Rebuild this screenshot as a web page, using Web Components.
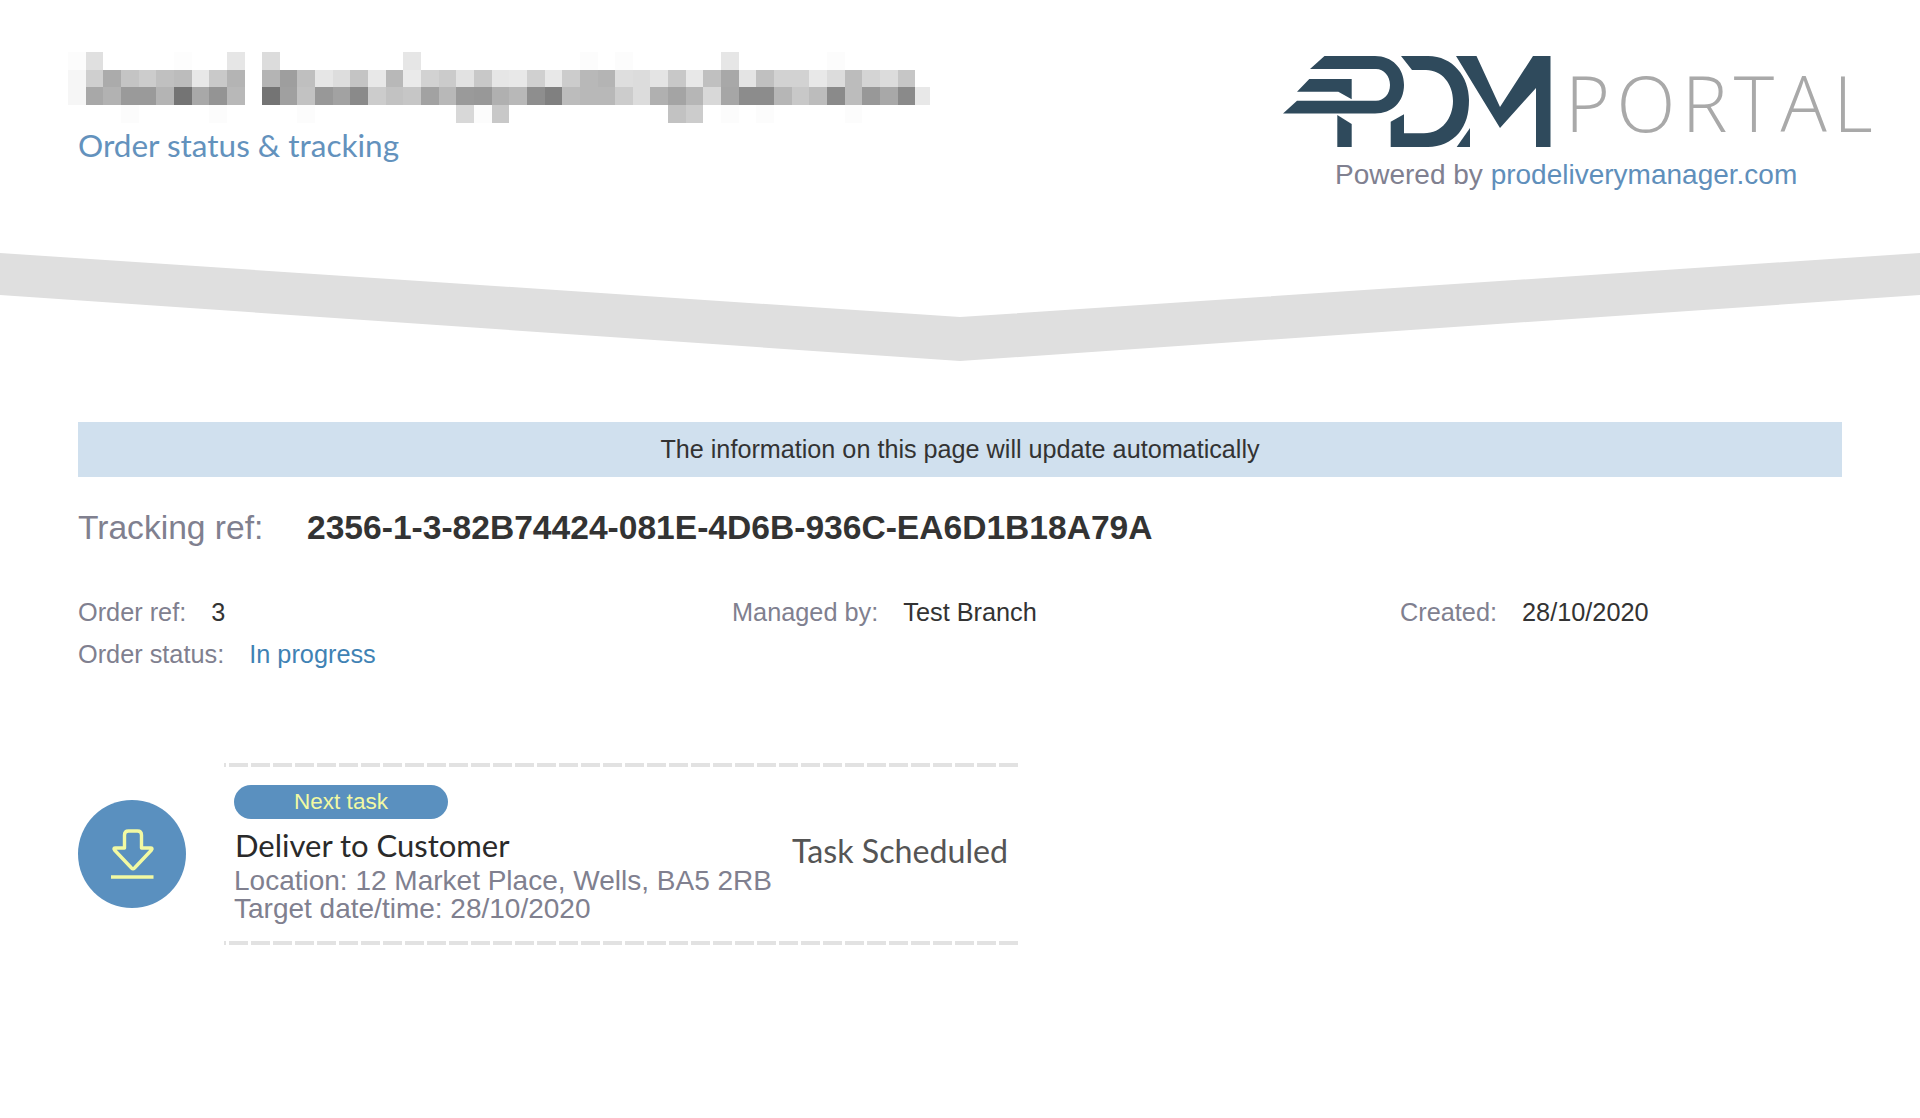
<!DOCTYPE html>
<html lang="en">
<head>
<meta charset="utf-8">
<title>Order status &amp; tracking</title>
<style>
  html, body { margin: 0; background: #fff; }
  body { font-family: "Liberation Sans", Arial, sans-serif; color: #333; }
</style>
</head>
<body>
<order-page></order-page>

<script>
// Small helper, every element just stamps its template into an open shadow root
function makeTemplate(html) {
  const template = document.createElement('template')
  template.innerHTML = html
  return template
}

class BaseElement extends HTMLElement {
  constructor() {
    super()
    this._shadowRoot = this.attachShadow({ mode: 'open' })
    this._shadowRoot.appendChild(this.constructor.template.content.cloneNode(true))
  }
}

// Blurred out company name, drawn as a mosaic of grey cells
const maskRows = [
  'fc e0 ff ff ff ff fd ff ff e6 ff dc ff ff ff ff ff ff ff e6 ff ff ff ff ff ff ff ff ff fc ff fc ff ff ff ff ff e6 ff ff ff ff ff fc ff ff ff ff ff',
  'f6 cf ab c4 cc c0 bc e8 c9 b4 ff b4 9e bf e6 dd c4 e8 b8 ea d2 cb e2 c8 e6 e8 d0 e8 cc b8 b4 de dc e4 c8 e8 c0 a8 e4 c0 d2 d2 e8 dc bc d4 dc c6 ff',
  'f6 a8 b2 9a 9a b4 74 a8 94 b8 ff 74 a0 c2 98 a2 8a cc c2 c6 a2 b8 9a 98 b0 b8 8e 80 bc b8 b8 cc dc b0 a4 b6 d8 a6 8c 8c b6 c8 bc 8a bc 98 a8 8a e8',
  'ff ff ff fc ff ff ff ff fc ff ff ff ff fc ff ff ff ff ff ff ff ff d8 fc c8 ff ff ff ff ff ff ff ff ff c2 cc ff fc ff fc ff ff ff ff fc ff ff ff ff'
]

class PixelMask extends BaseElement {
  static template = makeTemplate(`
    <style>
      :host { display: block; width: 862px; height: 71px; }
      svg { display: block; }
    </style>
    <svg width="862" height="71" viewBox="0 0 862 71" shape-rendering="crispEdges"></svg>
  `)

  connectedCallback() {
    const svg = this._shadowRoot.querySelector('svg')
    let out = ''
    maskRows.forEach((row, y) => {
      row.split(' ').forEach((grey, x) => {
        if (grey === 'ff') return
        const left = Math.round(x * 17.65)
        const right = Math.round((x + 1) * 17.65)
        const top = Math.round(y * 17.7)
        const bottom = Math.round((y + 1) * 17.7)
        out += `<rect x="${left}" y="${top}" width="${right - left}" height="${bottom - top}" fill="#${grey}${grey}${grey}"/>`
      })
    })
    svg.innerHTML = out
  }
}

class PdmLogo extends BaseElement {
  static template = makeTemplate(`
    <style>
      :host { display: block; width: 270px; height: 92px; }
      svg { display: block; }
    </style>
    <svg width="270" height="92" viewBox="1282 56 270 92" fill="#2f4a5c">
      <path d="M1310 69 L1324.5 56 H1375 C1392 56 1404 68 1404 85 C1404 102 1392 113.5 1375 113.5 H1283 L1297 100.7 H1376 C1384 100.7 1390 94 1390 85 C1390 76 1384 69 1376 69 Z"/>
      <path d="M1297 91.7 L1309.3 79 H1351.7 V99.3 L1338.3 91.7 Z"/>
      <path d="M1337.3 115 L1351.7 124 V147 H1337.3 Z"/>
      <path d="M1390.7 121.7 L1404 114.3 V133.3 H1424 C1442 133.3 1453 118 1453 101 C1453 84 1442 70 1426 70 H1412 L1401 56 H1428 C1453 56 1469 77 1469 100 C1469 114 1466 124 1459 133 C1451 142 1440 147 1428 147 H1390.7 Z"/>
      <path d="M1456.7 147 L1470 128 V147 Z"/>
      <path d="M1456 56 H1476.5 L1500 107 L1533 56 H1550.5 V147 H1536 V88 L1500 128 Z"/>
    </svg>
  `)
}

class OrderHeader extends BaseElement {
  static template = makeTemplate(`
    <style>
      :host { display: flex; justify-content: space-between; height: 253px; box-sizing: border-box; padding: 52px 0 0 68px; }
      .title { font: 400 31.5px/36px Lato, sans-serif; color: #6392bd; margin: 4px 0 0 10px; }
      .brand { width: 638px; display: flex; flex-direction: column; align-items: flex-start; padding-top: 4px; }
      .mark { display: flex; align-items: flex-start; }
      .portal { font: 300 77px/1 "Open Sans", sans-serif; color: #a9a9a9; letter-spacing: 6.4px; margin: 8px 0 0 13px; }
      .powered { font-size: 28px; line-height: 32px; color: #808090; margin: 11px 0 0 53px; white-space: nowrap; }
      .powered span { color: #5f8fbb; }
    </style>
    <div>
      <pixel-mask></pixel-mask>
      <div class="title">Order status &amp; tracking</div>
    </div>
    <div class="brand">
      <div class="mark">
        <pdm-logo></pdm-logo>
        <div class="portal">PORTAL</div>
      </div>
      <div class="powered">Powered by <span>prodeliverymanager.com</span></div>
    </div>
  `)
}

class ChevronBand extends BaseElement {
  static template = makeTemplate(`
    <style>
      :host { display: block; height: 108px; }
      svg { display: block; }
    </style>
    <svg width="1920" height="108" viewBox="0 0 1920 108">
      <polygon fill="#dfdfdf" points="0,0 960,64 1920,0 1920,42 960,108 0,42"/>
    </svg>
  `)
}

class NoticeBar extends BaseElement {
  static template = makeTemplate(`
    <style>
      :host { display: block; height: 55px; margin: 61px 78px 0; background: #d0e0ee; color: #333; font-size: 25.2px; line-height: 55px; text-align: center; }
    </style>
    <slot></slot>
  `)
}

class TrackingRef extends BaseElement {
  static template = makeTemplate(`
    <style>
      :host { display: flex; align-items: baseline; margin: 30px 78px 0; height: 42px; font-size: 33.6px; line-height: 42px; }
      .label { color: #80808f; width: 229px; }
      .value { font-weight: 700; color: #333; }
    </style>
    <div class="label">Tracking ref:</div>
    <div class="value"><slot></slot></div>
  `)
}

class MetaItem extends BaseElement {
  static template = makeTemplate(`
    <style>
      :host { display: flex; font-size: 25.3px; line-height: 42px; color: #333; }
      .label { color: #80808f; margin-right: 25px; }
      :host([accent]) .value { color: #3f82b4; }
    </style>
    <div class="label"><slot name="label"></slot></div>
    <div class="value"><slot></slot></div>
  `)
}

class OrderMeta extends BaseElement {
  static template = makeTemplate(`
    <style>
      :host { display: grid; grid-template-columns: 654px 668px 1fr; margin: 42px 78px 0; }
    </style>
    <slot></slot>
  `)
}

class TaskRow extends BaseElement {
  static template = makeTemplate(`
    <style>
      :host { display: flex; align-items: center; margin: 88px 0 0 78px; }
      .circle { width: 108px; height: 108px; border-radius: 50%; background: #5a90bf; flex: none; }
      .circle svg { display: block; }
      .box { position: relative; box-sizing: border-box; width: 797px; height: 182px; margin-left: 38px; padding: 22px 0 0 10px; display: flex; }
      .box::before, .box::after { content: ""; position: absolute; left: 0; right: 0; height: 4px; background: repeating-linear-gradient(90deg, #e2e2e2 0 19px, #fff 19px 22px) 5px 0 / 22px 4px repeat-x; }
      .box::before { top: 0; }
      .box::after { bottom: 0; }
      .badge { width: 214px; height: 34px; border-radius: 17px; background: #5a90bf; color: #f2f9a2; font-size: 22.5px; line-height: 34px; text-align: center; }
      .name { font: 400 31px/36px Lato, sans-serif; color: #2a2a2a; margin: 8px 0 0 1px; }
      .info { font-size: 28px; line-height: 28px; color: #80808f; margin: 4px 0 0; white-space: nowrap; }
      .status { font: 400 32.2px/36px Lato, sans-serif; color: #555; margin: 48px 0 0 20px; white-space: nowrap; }
    </style>
    <div class="circle">
      <svg width="108" height="108" viewBox="78 800 108 108" fill="none" stroke="#f2f9a2" stroke-width="3.4" stroke-linejoin="round">
        <path d="M124.5 848 V835 Q124.5 831 128.5 831 H137.5 Q141.5 831 141.5 835 V848 H150.5 Q153 848 151.5 850 L134.5 868 Q133 869.5 131.5 868 L114.5 850 Q113 848 115.5 848 Z"/>
        <path d="M111 877 H153.5"/>
      </svg>
    </div>
    <div class="box">
      <div>
        <div class="badge">Next task</div>
        <div class="name"><slot name="name"></slot></div>
        <div class="info"><slot name="location"></slot><br><slot name="target"></slot></div>
      </div>
      <div class="status"><slot name="status"></slot></div>
    </div>
  `)
}

class OrderPage extends BaseElement {
  static template = makeTemplate(`
    <style>
      :host { display: block; height: 1118px; overflow: hidden; }
    </style>
    <order-header></order-header>
    <chevron-band></chevron-band>
    <notice-bar>The information on this page will update automatically</notice-bar>
    <tracking-ref>2356-1-3-82B74424-081E-4D6B-936C-EA6D1B18A79A</tracking-ref>
    <order-meta>
      <meta-item><span slot="label">Order ref:</span>3</meta-item>
      <meta-item><span slot="label">Managed by:</span>Test Branch</meta-item>
      <meta-item><span slot="label">Created:</span>28/10/2020</meta-item>
      <meta-item accent><span slot="label">Order status:</span>In progress</meta-item>
    </order-meta>
    <task-row>
      <span slot="name">Deliver to Customer</span>
      <span slot="location">Location: 12 Market Place, Wells, BA5 2RB</span>
      <span slot="target">Target date/time: 28/10/2020</span>
      <span slot="status">Task Scheduled</span>
    </task-row>
  `)
}

customElements.define('pixel-mask', PixelMask)
customElements.define('pdm-logo', PdmLogo)
customElements.define('order-header', OrderHeader)
customElements.define('chevron-band', ChevronBand)
customElements.define('notice-bar', NoticeBar)
customElements.define('tracking-ref', TrackingRef)
customElements.define('meta-item', MetaItem)
customElements.define('order-meta', OrderMeta)
customElements.define('task-row', TaskRow)
customElements.define('order-page', OrderPage)
</script>
</body>
</html>
